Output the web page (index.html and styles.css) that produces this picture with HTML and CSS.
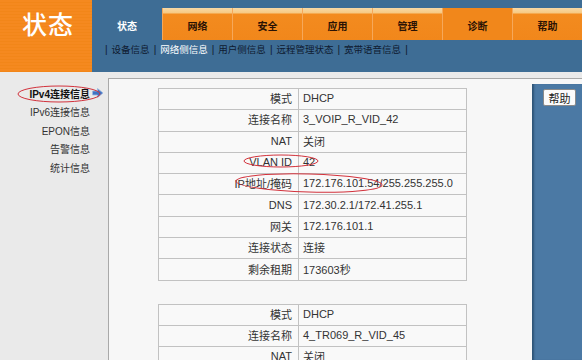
FILE: index.html
```html
<!DOCTYPE html>
<html lang="zh-CN">
<head>
<meta charset="utf-8">
<title>状态</title>
<link rel="stylesheet" href="styles.css">
</head>
<body>
<div class="page">
  <header class="header">
    <div class="logo">状态</div>
    <div class="nav">
      <div class="tabs">
        <div class="tab active">状态</div>
        <div class="tab">网络</div>
        <div class="tab">安全</div>
        <div class="tab">应用</div>
        <div class="tab">管理</div>
        <div class="tab nohl">诊断</div>
        <div class="tab">帮助</div>
      </div>
      <div class="submenu">
        <span class="sep">|</span><span class="sub">设备信息</span><span class="sep">|</span><span class="sub on">网络侧信息</span><span class="sep">|</span><span class="sub">用户侧信息</span><span class="sep">|</span><span class="sub">远程管理状态</span><span class="sep">|</span><span class="sub">宽带语音信息</span><span class="sep">|</span>
      </div>
    </div>
  </header>
  <div class="main">
    <aside class="sidebar">
      <div class="side-item current"><span>IPv4连接信息</span><span class="slot"><svg class="arrow" width="12" height="10" viewBox="0 0 12 10"><path d="M0.5 3 H5.5 V0.5 L11 5 L5.5 9.5 V7 H0.5 Z" fill="#3f73c4" stroke="#9fb9e0" stroke-width="0.8"/></svg></span></div>
      <div class="side-item"><span>IPv6连接信息</span><span class="slot"></span></div>
      <div class="side-item"><span>EPON信息</span><span class="slot"></span></div>
      <div class="side-item"><span>告警信息</span><span class="slot"></span></div>
      <div class="side-item"><span>统计信息</span><span class="slot"></span></div>
    </aside>
    <section class="content">
      <div class="tables">
        <table class="info">
          <tr><td class="lbl">模式</td><td class="val">DHCP</td></tr>
          <tr><td class="lbl">连接名称</td><td class="val">3_VOIP_R_VID_42</td></tr>
          <tr><td class="lbl">NAT</td><td class="val">关闭</td></tr>
          <tr><td class="lbl">VLAN ID</td><td class="val">42</td></tr>
          <tr><td class="lbl">IP地址/掩码</td><td class="val">172.176.101.54/255.255.255.0</td></tr>
          <tr><td class="lbl">DNS</td><td class="val">172.30.2.1/172.41.255.1</td></tr>
          <tr><td class="lbl">网关</td><td class="val">172.176.101.1</td></tr>
          <tr><td class="lbl">连接状态</td><td class="val">连接</td></tr>
          <tr><td class="lbl">剩余租期</td><td class="val">173603秒</td></tr>
        </table>
        <table class="info">
          <tr><td class="lbl">模式</td><td class="val">DHCP</td></tr>
          <tr><td class="lbl">连接名称</td><td class="val">4_TR069_R_VID_45</td></tr>
          <tr><td class="lbl">NAT</td><td class="val">关闭</td></tr>
        </table>
      </div>
      <aside class="helppanel"><button class="helpbtn" type="button">帮助</button></aside>
    </section>
  </div>
  <svg class="marks" width="582" height="360" viewBox="0 0 582 360">
    <ellipse cx="59" cy="94" rx="41" ry="8" fill="none" stroke="#d2323c" stroke-width="1"/>
    <ellipse cx="281" cy="161" rx="37" ry="6" fill="none" stroke="#d2323c" stroke-width="1"/>
    <ellipse cx="309" cy="183" rx="73" ry="9" fill="none" stroke="#d2323c" stroke-width="1" transform="rotate(1.5 309 183)"/>
  </svg>
</div>
</body>
</html>
```

FILE: styles.css
```css
* { box-sizing: border-box; }
html, body { margin: 0; padding: 0; }
body {
  width: 582px;
  height: 360px;
  overflow: hidden;
  font-family: "Liberation Sans", "Noto Sans CJK SC", sans-serif;
  font-size: 11px;
  color: #222;
  background: #f7f7f7;
}
.page { position: relative; width: 582px; height: 360px; overflow: hidden; }

.header { display: flex; height: 72px; }
.logo {
  width: 108px;
  background: repeating-linear-gradient(180deg, #f5891f 0 2px, #f28619 2px 3px);
  color: #fff;
  font-family: "Noto Sans CJK SC", sans-serif;
  font-weight: 500;
  font-size: 25px;
  line-height: 26px;
  padding: 10px 0 0 22px;
  letter-spacing: 1px;
}
.nav { flex: 1; background: #3e6d95; display: flex; flex-direction: column; }
.tabs { display: flex; margin-top: 8px; height: 32px; }
.tab {
  width: 70px;
  flex: none;
  background: linear-gradient(180deg, #f9d9a6 0, #f6c983 5px, #f38b1f 6px, #f1871b 100%);
  color: #2a1204;
  font-weight: bold;
  font-family: "Noto Sans CJK SC", sans-serif;
  font-size: 10px;
  text-align: center;
  line-height: 32px;
  padding-top: 2px;
  border-left: 1px solid #f6a85a;
}
.tab.nohl { background: #f1871b; }
.tab.active {
  background: transparent;
  color: #fff;
  border-left: none;
}
.submenu {
  height: 32px;
  padding: 2px 0 0 13px;
  line-height: 14px;
  color: #0e1a30;
  font-family: "Noto Sans CJK SC", sans-serif;
  font-size: 9.5px;
  white-space: nowrap;
}
.sep { margin: 0 4px; font-family: "Liberation Sans", sans-serif; font-size: 10px; }
.sep:first-child { margin-left: 0; }
.sub.on { color: #fff; }

.main {
  display: flex;
  height: 288px;
  background: #eaeaea;
  padding-top: 6px;
}
.sidebar { width: 108px; padding-top: 6px; flex: none; }
.side-item {
  display: flex;
  justify-content: flex-end;
  align-items: center;
  height: 18.5px;
  color: #333;
  font-family: "Liberation Sans", "Noto Sans CJK SC", sans-serif;
  font-size: 10px;
}
.side-item.current { font-weight: bold; color: #111; }
.slot { width: 18px; flex: none; display: flex; align-items: center; padding-left: 2px; }
.arrow { display: block; }

.content {
  flex: 1;
  display: flex;
  background: #f7f7f7;
  border-top: 1px solid #a9a9a9;
  border-left: 1px solid #a9a9a9;
}
.tables { width: 423px; flex: none; padding: 9px 0 0 49px; }
.info {
  width: 309px;
  border-collapse: collapse;
  background: #f9f9f9;
  margin-bottom: 23px;
}
.info td {
  border: 1px solid #c2c2c2;
  height: 21.3px;
  padding: 0 0 2px 0;
  white-space: nowrap;
}
.lbl { width: 140px; text-align: right; padding-right: 6px !important; color: #333; }
.val { padding-left: 4px !important; color: #333; }

.helppanel {
  flex: 1;
  margin-top: 5px;
  background: #4b79a4;
  box-shadow: inset 3px 0 2px -1px #2f5578;
  padding: 5px 0 0 11px;
}
.helpbtn {
  width: 33px;
  height: 17px;
  padding: 0;
  background: #fbfbfb;
  border: 1px solid #8a8a8a;
  border-radius: 2px;
  font-family: "Noto Sans CJK SC", sans-serif;
  font-size: 11px;
  line-height: 14px;
  color: #222;
}

.marks { position: absolute; left: 0; top: 0; pointer-events: none; }
```
